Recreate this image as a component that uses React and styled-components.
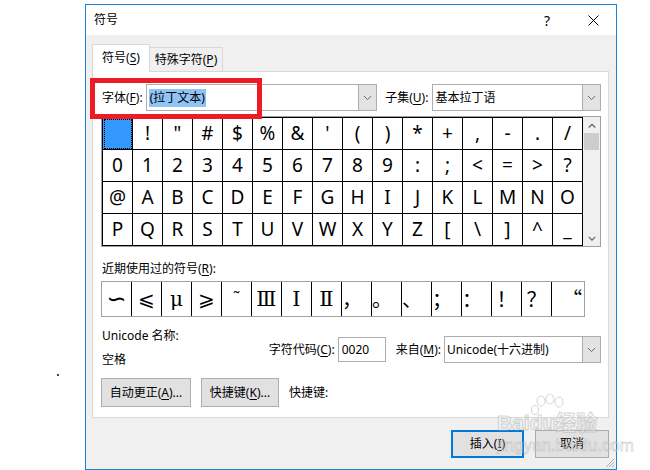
import React from 'react';
import styled, { createGlobalStyle } from 'styled-components';

const GlobalStyle = createGlobalStyle`
  html, body { margin: 0; padding: 0; background: #fff; }
  body {
    font-family: "Noto Sans", "Noto Sans CJK SC", sans-serif;
    font-size: 12px;
    color: #000;
  }
  * { box-sizing: border-box; }
`;

const Page = styled.div`
  position: relative;
  width: 650px;
  height: 470px;
  padding: 4px 0 0 85px;
  overflow: hidden;
`;

const Dialog = styled.div`
  width: 532px;
  height: 466px;
  border: 1px solid #1883d7;
  background: #f0f0f0;
  display: flex;
  flex-direction: column;
`;

const TitleBar = styled.div`
  height: 30px;
  flex: 0 0 30px;
  background: #fff;
  display: flex;
  align-items: center;
  padding-left: 8px;
`;

const TitleText = styled.div`
  flex: 1;
  line-height: 16px;
`;

const TitleButton = styled.div`
  width: 46px;
  height: 30px;
  display: flex;
  align-items: center;
  justify-content: center;
  font-family: "Noto Sans", sans-serif;
  font-size: 14px;
`;

const Body = styled.div`
  flex: 1;
  padding: 9px 7px 0 6px;
  display: flex;
  flex-direction: column;
`;

const Tabs = styled.div`
  display: flex;
  align-items: flex-start;
  height: 28px;
  margin-bottom: -1px;
  position: relative;
  z-index: 1;
`;

const Tab = styled.div`
  width: ${p => p.$w}px;
  height: ${p => (p.$active ? 28 : 24)}px;
  margin-top: ${p => (p.$active ? 0 : 3)}px;
  margin-left: ${p => (p.$active ? 0 : -1)}px;
  border: 1px solid #d9d9d9;
  border-bottom: none;
  background: ${p => (p.$active ? '#fff' : '#f0f0f0')};
  display: flex;
  align-items: center;
  justify-content: center;
  padding-bottom: ${p => (p.$active ? 2 : 0)}px;
  line-height: 16px;
  white-space: nowrap;
`;

const Panel = styled.div`
  width: 517px;
  height: 347px;
  background: #fff;
  border: 1px solid #d9d9d9;
  padding: 0 7px 0 8px;
  display: flex;
  flex-direction: column;
`;

const FontRow = styled.div`
  margin-top: 12px;
  height: 27px;
  display: flex;
  align-items: center;
`;

const Label = styled.span`
  line-height: 16px;
  white-space: nowrap;
  margin-left: ${p => p.$ml || 0}px;
  margin-right: ${p => p.$mr || 0}px;
`;

const Select = styled.div`
  width: ${p => p.$w}px;
  height: 27px;
  border: 1px solid #adadad;
  background: #fff;
  display: flex;
  align-items: stretch;
`;

const SelectValue = styled.div`
  flex: 1;
  display: flex;
  align-items: center;
  padding-left: 2px;
  white-space: nowrap;
  line-height: 16px;
`;

const Highlight = styled.span`
  background: #90c3f6;
  padding: 1px 1px;
`;

const ArrowBox = styled.div`
  width: 18px;
  background: #e3e3e3;
  border-left: 1px solid #adadad;
  display: flex;
  align-items: center;
  justify-content: center;
`;

const Chevron = ({ up, color = '#606060', w = 9, sw = 1 }) => (
  <svg width={w} height={w / 2 + 1} viewBox="0 0 10 6">
    <path d={up ? 'M1 5.5 L5 1.5 L9 5.5' : 'M1 1 L5 5 L9 1'} fill="none" stroke={color} strokeWidth={sw} />
  </svg>
);

const GridBox = styled.div`
  margin-top: 5px;
  width: 500px;
  height: 131px;
  border: 1px solid #a0a0a0;
  display: flex;
`;

const CharGrid = styled.div`
  display: grid;
  grid-template-columns: repeat(16, 30px);
  grid-template-rows: repeat(4, 32px);
  border-left: 1px solid #000;
  border-top: 1px solid #000;
`;

const Cell = styled.div`
  border-right: 1px solid #000;
  border-bottom: 1px solid #000;
  display: flex;
  align-items: center;
  justify-content: center;
  font-family: "Noto Sans", "DejaVu Sans", sans-serif;
  font-size: 19px;
  line-height: 1;
  background: ${p => (p.$sel ? '#3399ff' : '#fff')};
  outline: ${p => (p.$sel ? '1px dotted #000' : 'none')};
  outline-offset: -2px;
`;

const ScrollBar = styled.div`
  width: 17px;
  background: #f0f0f0;
  display: flex;
  flex-direction: column;
`;

const ScrollBtn = styled.div`
  height: 16px;
  display: flex;
  align-items: center;
  justify-content: center;
`;

const Thumb = styled.div`
  height: 17px;
  margin: 0 1px;
  background: #cdcdcd;
`;

const ScrollTrack = styled.div`
  flex: 1;
`;

const RecentLabel = styled.div`
  margin-top: 14px;
  line-height: 16px;
  padding-left: 1px;
`;

const RecentRow = styled.div`
  margin-top: 4px;
  width: 484px;
  height: 36px;
  border: 1px solid #a0a0a0;
  display: grid;
  grid-template-columns: repeat(15, 30px) 1fr;
`;

const fontFor = kind =>
  kind === 'cjk'
    ? '"Noto Sans CJK SC", sans-serif'
    : kind === 'sans'
    ? '"DejaVu Sans", sans-serif'
    : '"DejaVu Serif", "Liberation Serif", "Noto Sans CJK SC", serif';

const RecentCell = styled.div`
  border-right: ${p => (p.$last ? 'none' : '1px solid #000')};
  display: flex;
  align-items: center;
  justify-content: ${p => p.$align || 'center'};
  padding-left: ${p => p.$pl || 0}px;
  font-family: ${p => fontFor(p.$kind)};
  font-size: ${p => p.$fs || 20}px;
  line-height: 1;
`;

const InfoArea = styled.div`
  margin-top: 11px;
  height: 40px;
  display: flex;
`;

const InfoLeft = styled.div`
  display: flex;
  flex-direction: column;
  gap: 8px;
  padding-left: 1px;
  line-height: 16px;
`;

const InfoRight = styled.div`
  margin-left: auto;
  margin-top: 8px;
  height: 27px;
  display: flex;
  align-items: center;
`;

const CodeInput = styled.div`
  width: 48px;
  height: 25px;
  border: 1px solid #adadad;
  background: #fff;
  display: flex;
  align-items: center;
  padding-left: 3px;
  line-height: 16px;
`;

const ButtonRow = styled.div`
  margin-top: 10px;
  display: flex;
  align-items: center;
  gap: 10px;
`;

const Button = styled.div`
  width: ${p => p.$w}px;
  height: ${p => p.$h || 29}px;
  background: #e1e1e1;
  border: ${p => (p.$default ? '2px solid #0078d7' : '1px solid #adadad')};
  display: flex;
  align-items: center;
  justify-content: center;
  line-height: 16px;
  white-space: nowrap;
`;

const Footer = styled.div`
  margin-top: 12px;
  display: flex;
  justify-content: flex-end;
  gap: 11px;
`;

const RedFrame = styled.div`
  position: absolute;
  left: 90px;
  top: 78px;
  width: 172px;
  height: 41px;
  border: 5px solid #ed1c24;
  pointer-events: none;
`;

const Dot = styled.div`
  position: absolute;
  left: 57px;
  top: 374px;
  width: 2px;
  height: 2px;
  background: #444;
`;

const Grip = styled.svg`
  position: absolute;
  left: 605px;
  top: 458px;
`;

const Watermark = styled.div`
  position: absolute;
  left: 497px;
  top: 394px;
  pointer-events: none;
  opacity: 0.55;
`;

const Paw = styled.svg`
  display: block;
`;

const WmMain = styled.div`
  font-family: "Liberation Sans", "Noto Sans CJK SC", sans-serif;
  font-weight: bold;
  font-size: 21px;
  line-height: 22px;
  color: rgba(255, 255, 255, 0.7);
  -webkit-text-stroke: 1px #b5b5b5;
  white-space: nowrap;
  margin-top: -6px;
`;

const WmSub = styled.div`
  font-family: "Liberation Sans", sans-serif;
  font-size: 17px;
  line-height: 18px;
  color: rgba(255, 255, 255, 0.7);
  -webkit-text-stroke: 0.8px #b8b8b8;
  white-space: nowrap;
  margin-top: 3px;
`;

const U = styled.span`
  text-decoration: underline;
  text-underline-offset: 2px;
`;

const rows = [
  [' ', '!', '"', '#', '$', '%', '&', "'", '(', ')', '*', '+', ',', '-', '.', '/'],
  ['0', '1', '2', '3', '4', '5', '6', '7', '8', '9', ':', ';', '<', '=', '>', '?'],
  ['@', 'A', 'B', 'C', 'D', 'E', 'F', 'G', 'H', 'I', 'J', 'K', 'L', 'M', 'N', 'O'],
  ['P', 'Q', 'R', 'S', 'T', 'U', 'V', 'W', 'X', 'Y', 'Z', '[', '\\', ']', '^', '_'],
];

const recent = [
  { c: '∽', kind: 'sans', fs: 24 },
  { c: '⩽' },
  { c: 'μ' },
  { c: '⩾' },
  { c: '˜', fs: 18 },
  { c: 'Ⅲ', fs: 21 },
  { c: 'Ⅰ', fs: 21 },
  { c: 'Ⅱ', fs: 21 },
  { c: '，', kind: 'cjk', align: 'flex-start' },
  { c: '。', kind: 'cjk', align: 'flex-start' },
  { c: '、', kind: 'cjk', align: 'flex-start' },
  { c: '；', kind: 'cjk', align: 'flex-start' },
  { c: '：', kind: 'cjk', align: 'flex-start' },
  { c: '！', kind: 'cjk' },
  { c: '？', kind: 'cjk' },
  { c: '“', kind: 'cjk', pl: 8 },
];

export default function App() {
  return (
    <>
      <GlobalStyle />
      <Page>
        <Dialog>
          <TitleBar>
            <TitleText>符号</TitleText>
            <TitleButton>?</TitleButton>
            <TitleButton>
              <svg width="11" height="11" viewBox="0 0 11 11">
                <path d="M0.5 0.5 L10.5 10.5 M10.5 0.5 L0.5 10.5" stroke="#000" strokeWidth="1" />
              </svg>
            </TitleButton>
          </TitleBar>
          <Body>
            <Tabs>
              <Tab $active $w={58}>符号(<U>S</U>)</Tab>
              <Tab $w={74}>特殊字符(<U>P</U>)</Tab>
            </Tabs>
            <Panel>
              <FontRow>
                <Label $ml={1} $mr={3}>字体(<U>F</U>):</Label>
                <Select $w={232}>
                  <SelectValue><Highlight>(拉丁文本)</Highlight></SelectValue>
                  <ArrowBox><Chevron /></ArrowBox>
                </Select>
                <Label $ml={8} $mr={4}>子集(<U>U</U>):</Label>
                <Select $w={169}>
                  <SelectValue>基本拉丁语</SelectValue>
                  <ArrowBox><Chevron /></ArrowBox>
                </Select>
              </FontRow>
              <GridBox>
                <CharGrid>
                  {rows.flat().map((c, i) => (
                    <Cell key={i} $sel={i === 0}>{c === ' ' ? '\u00a0' : c}</Cell>
                  ))}
                </CharGrid>
                <ScrollBar>
                  <ScrollBtn><Chevron up color="#606060" w={8} sw={1.6} /></ScrollBtn>
                  <Thumb />
                  <ScrollTrack />
                  <ScrollBtn><Chevron color="#606060" w={8} sw={1.6} /></ScrollBtn>
                </ScrollBar>
              </GridBox>
              <RecentLabel>近期使用过的符号(<U>R</U>):</RecentLabel>
              <RecentRow>
                {recent.map((r, i) => (
                  <RecentCell
                    key={i}
                    $last={i === recent.length - 1}
                    $kind={r.kind}
                    $align={r.align}
                    $pl={r.pl}
                    $fs={r.fs}
                  >
                    {r.c}
                  </RecentCell>
                ))}
              </RecentRow>
              <InfoArea>
                <InfoLeft>
                  <span>Unicode 名称:</span>
                  <span>空格</span>
                </InfoLeft>
                <InfoRight>
                  <Label $mr={3}>字符代码(<U>C</U>):</Label>
                  <CodeInput>0020</CodeInput>
                  <Label $ml={10} $mr={3}>来自(<U>M</U>):</Label>
                  <Select $w={157}>
                    <SelectValue>Unicode(十六进制)</SelectValue>
                    <ArrowBox><Chevron /></ArrowBox>
                  </Select>
                </InfoRight>
              </InfoArea>
              <ButtonRow>
                <Button $w={90}>自动更正(<U>A</U>)...</Button>
                <Button $w={78}>快捷键(<U>K</U>)...</Button>
                <Label>快捷键:</Label>
              </ButtonRow>
            </Panel>
            <Footer>
              <Button $default $w={73} $h={28}>插入(<U>I</U>)</Button>
              <Button $w={74} $h={28}>取消</Button>
            </Footer>
          </Body>
        </Dialog>
        <RedFrame />
        <Dot />
        <Grip width="10" height="10" viewBox="0 0 10 10">
          <path d="M9 1 L1 9 M9 4 L4 9 M9 7 L7 9" stroke="#b0b0b0" strokeWidth="1" />
        </Grip>
        <Watermark>
          <Paw width="80" height="24" viewBox="0 0 80 24">
            <g fill="rgba(255,255,255,0.6)" stroke="#b5b5b5" strokeWidth="1">
              <ellipse cx="44" cy="7" rx="4" ry="5" />
              <ellipse cx="53" cy="5" rx="4" ry="5" />
              <ellipse cx="62" cy="8" rx="4" ry="5" />
              <ellipse cx="38" cy="16" rx="3.5" ry="4.5" />
            </g>
          </Paw>
          <WmMain>Baidu经验</WmMain>
          <WmSub>jingyan.baidu.com</WmSub>
        </Watermark>
      </Page>
    </>
  );
}
